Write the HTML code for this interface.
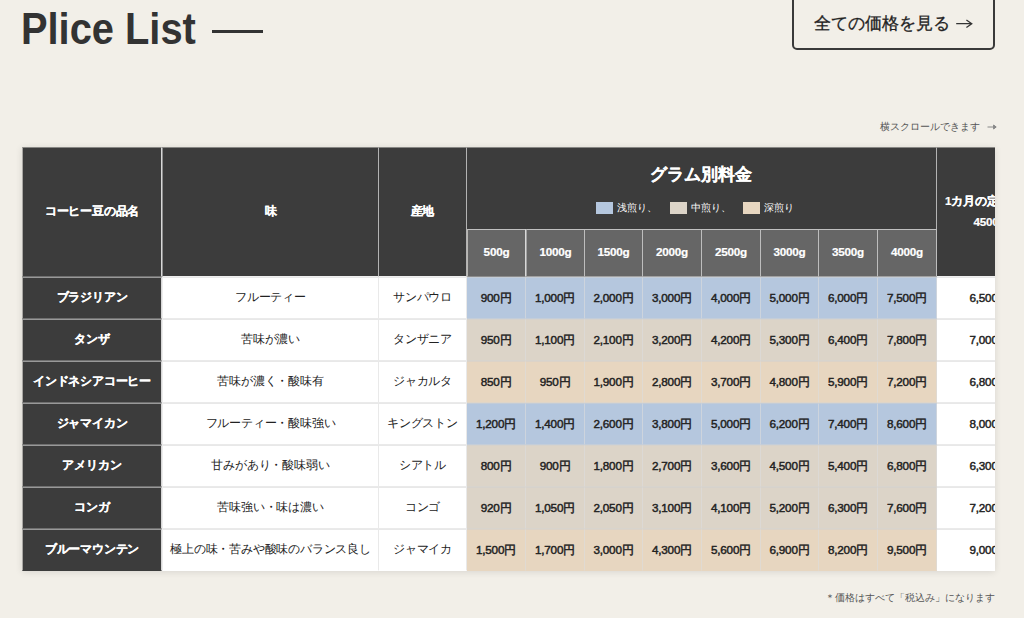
<!DOCTYPE html>
<html lang="ja">
<head>
<meta charset="utf-8">
<title>Plice List</title>
<style>
*{box-sizing:border-box;margin:0;padding:0}
html,body{width:1024px;height:618px;overflow:hidden}
body{background:#f2efe8;font-family:"Liberation Sans",sans-serif;color:#222;position:relative}
h2{position:absolute;left:20.5px;top:4px;font-size:44px;line-height:50px;font-weight:700;color:#333;white-space:nowrap;transform:scaleX(.905);transform-origin:0 0}
.dash{position:absolute;left:212px;top:30px;width:50.5px;height:3px;background:#333}
.btn{position:absolute;left:792px;top:-8px;width:203px;height:58px;padding-top:6px;-webkit-text-stroke:.3px #222;border:2px solid #3a3a3a;border-radius:5px;font-size:16.5px;font-weight:500;color:#222;text-decoration:none;white-space:nowrap;line-height:46px;padding-left:19.5px}
.btn svg{position:absolute;left:162px;top:25px}
.hint{position:absolute;right:26px;padding-right:18.5px;top:120px;font-size:10px;line-height:14px;color:#555;white-space:nowrap}
.hint svg{position:absolute;right:.5px;top:3px}
.wrap{position:absolute;left:22px;top:147px;width:973px;height:424px;overflow:hidden;box-shadow:0 1px 7px rgba(0,0,0,.11);background:#fff}
table{border-collapse:separate;border-spacing:0;table-layout:fixed;width:1021px;font-size:11.7px;letter-spacing:-.2px}
th,td{text-align:center;vertical-align:middle;overflow:hidden;white-space:nowrap;padding:0;border:0 solid rgba(221,221,221,.74);border-right-width:1px;background-clip:border-box}
th{background:#3c3c3c;color:#fff;font-weight:700;-webkit-text-stroke:.2px #fff}
thead th{border-top:1px solid rgba(242,239,232,.42);border-bottom:1px solid #eee;padding-bottom:2px}
thead th:first-child,tbody th{border-left:1px solid rgba(242,239,232,.6);border-right-color:#d8d8d8}
thead th:first-child{border-bottom:1px solid rgba(221,221,221,.32)}
thead th:nth-child(2),tbody td:nth-child(2){border-left:1px solid rgba(221,221,221,.52)}
th.g{background:#666;height:48px;padding-bottom:3px;border-top:1px solid rgba(221,221,221,.76);border-bottom:1px solid rgba(221,221,221,.5)}
th.grp{height:82px;vertical-align:top;padding-right:1px;border-bottom:0}
.grp b{display:block;font-size:16.6px;letter-spacing:-.1px;line-height:24px;margin-top:15px;padding-left:0}
.lg{display:block;letter-spacing:0;-webkit-text-stroke:0;font-size:10px;font-weight:400;line-height:12px;margin-top:15px}
.lg i{display:inline-block;width:17px;height:12px;vertical-align:top;margin-right:4px}
.lg span{display:inline-block;margin-right:12px;text-align:left}
.lg span.a{width:61.5px}.lg span.c{width:51px}
tbody tr{height:42px}
tbody th,tbody td{padding-bottom:1px}
tbody th{height:42px;border-top:1px solid rgba(221,221,221,.58);border-bottom:1px solid rgba(221,221,221,.32)}
td{background:#fff;color:#222;height:42px;border-top:1px solid rgba(210,210,210,.5);border-bottom:1px solid rgba(210,210,210,.47);border-right-color:rgba(221,221,221,.62)}
tbody tr:last-child>*{border-bottom-color:transparent}
tbody td.p,tbody td.l{font-weight:400;-webkit-text-stroke:.45px #222;padding:1px 0 0}
.bl td.p{background:#b5c7de}
.gr td.p{background:#dcd4c8}
.be td.p{background:#e7d6c0}
.note{position:absolute;right:29.5px;top:591px;font-size:10px;line-height:14px;color:#555;white-space:nowrap}
</style>
</head>
<body>
<h2>Plice List</h2><div class="dash"></div>
<a class="btn">全ての価格を見る<svg width="18" height="10" viewBox="0 0 18 10"><path d="M.2 4.7H15.6M10.4.9l5.4 3.8-5.4 3.9" fill="none" stroke="#333" stroke-width="1.25"/></svg></a>
<p class="hint">横スクロールできます<svg width="11" height="8" viewBox="0 0 11 8"><path d="M.5 4H9M6.6 2l2.6 2-2.6 2z" fill="#888" stroke="#888" stroke-width="1"/></svg></p>
<div class="wrap">
<table>
<colgroup><col style="width:140px"><col style="width:217px"><col style="width:88px"><col style="width:59px"><col style="width:59px"><col style="width:58px"><col style="width:59px"><col style="width:59px"><col style="width:58px"><col style="width:59px"><col style="width:59px"><col style="width:106px"></colgroup>
<thead>
<tr><th rowspan="2">コーヒー豆の品名</th><th rowspan="2">味</th><th rowspan="2">産地</th><th colspan="8" class="grp"><b>グラム別料金</b><span class="lg"><span class="a"><i style="background:#b5c7de"></i>浅煎り、</span><span class="a"><i style="background:#dcd4c8"></i>中煎り、</span><span class="c"><i style="background:#e7d6c0"></i>深煎り</span></span></th><th rowspan="2">1カ月の定期購入<br><span style="display:inline-block;margin-top:6px">4500g</span></th></tr>
<tr><th class="g">500g</th><th class="g">1000g</th><th class="g">1500g</th><th class="g">2000g</th><th class="g">2500g</th><th class="g">3000g</th><th class="g">3500g</th><th class="g">4000g</th></tr>
</thead>
<tbody>
<tr class="bl"><th>ブラジリアン</th><td>フルーティー</td><td>サンパウロ</td><td class="p">900円</td><td class="p">1,000円</td><td class="p">2,000円</td><td class="p">3,000円</td><td class="p">4,000円</td><td class="p">5,000円</td><td class="p">6,000円</td><td class="p">7,500円</td><td class="l">6,500円</td></tr>
<tr class="gr"><th>タンザ</th><td>苦味が濃い</td><td>タンザニア</td><td class="p">950円</td><td class="p">1,100円</td><td class="p">2,100円</td><td class="p">3,200円</td><td class="p">4,200円</td><td class="p">5,300円</td><td class="p">6,400円</td><td class="p">7,800円</td><td class="l">7,000円</td></tr>
<tr class="be"><th>インドネシアコーヒー</th><td>苦味が濃く・酸味有</td><td>ジャカルタ</td><td class="p">850円</td><td class="p">950円</td><td class="p">1,900円</td><td class="p">2,800円</td><td class="p">3,700円</td><td class="p">4,800円</td><td class="p">5,900円</td><td class="p">7,200円</td><td class="l">6,800円</td></tr>
<tr class="bl"><th>ジャマイカン</th><td>フルーティー・酸味強い</td><td>キングストン</td><td class="p">1,200円</td><td class="p">1,400円</td><td class="p">2,600円</td><td class="p">3,800円</td><td class="p">5,000円</td><td class="p">6,200円</td><td class="p">7,400円</td><td class="p">8,600円</td><td class="l">8,000円</td></tr>
<tr class="gr"><th>アメリカン</th><td>甘みがあり・酸味弱い</td><td>シアトル</td><td class="p">800円</td><td class="p">900円</td><td class="p">1,800円</td><td class="p">2,700円</td><td class="p">3,600円</td><td class="p">4,500円</td><td class="p">5,400円</td><td class="p">6,800円</td><td class="l">6,300円</td></tr>
<tr class="gr"><th>コンガ</th><td>苦味強い・味は濃い</td><td>コンゴ</td><td class="p">920円</td><td class="p">1,050円</td><td class="p">2,050円</td><td class="p">3,100円</td><td class="p">4,100円</td><td class="p">5,200円</td><td class="p">6,300円</td><td class="p">7,600円</td><td class="l">7,200円</td></tr>
<tr class="be"><th>ブルーマウンテン</th><td>極上の味・苦みや酸味のバランス良し</td><td>ジャマイカ</td><td class="p">1,500円</td><td class="p">1,700円</td><td class="p">3,000円</td><td class="p">4,300円</td><td class="p">5,600円</td><td class="p">6,900円</td><td class="p">8,200円</td><td class="p">9,500円</td><td class="l">9,000円</td></tr>
</tbody>
</table>
</div>
<p class="note">＊価格はすべて「税込み」になります</p>
</body>
</html>
